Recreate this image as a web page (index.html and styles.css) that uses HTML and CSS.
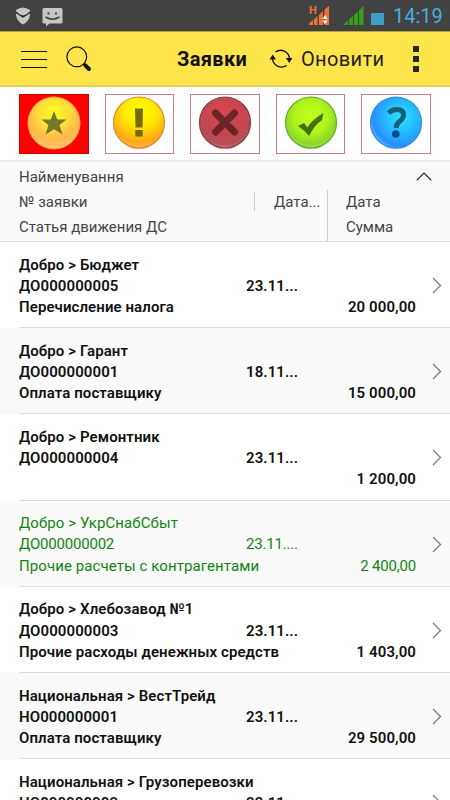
FILE: index.html
```html
<!DOCTYPE html>
<html lang="uk">
<head>
  <meta charset="UTF-8" />
  <meta name="viewport" content="width=device-width, initial-scale=1.0" />
  <title>Заявки</title>
  <link rel="stylesheet" href="styles.css">
</head>
<body>
  <div class="statusbar">
    <svg class="shield" width="16" height="18" viewBox="0 0 16 18">
      <path d="M1 3 Q4.500 0.500 8 0.500 Q11.500 0.500 15 3 V8 Q14.500 14 8 17.500 Q1.500 14 1 8 Z" fill="#c6c6c6" />
      <path d="M0.500 4 L5 7.500 L8 8.500 L11 7.500 L15.500 4 V6 L8 10.800 L0.500 6 Z" fill="#222" />
    </svg>
    <svg class="sms" width="21" height="20" viewBox="0 0 21 20">
      <path d="M2 1 H19 Q20.500 1 20.500 2.500 V15 Q20.500 16.500 19 16.500 H7.500 L4 19.500 V16.500 H2 Q0.500 16.500 0.500 15 V2.500 Q0.500 1 2 1 Z" fill="#c6c6c6" />
      <path d="M5.500 5.500 h2 v2 h-2 Z M13 5.500 h2 v2 h-2 Z" fill="#424242" />
      <path d="M3.500 10 Q10.500 14.500 17.500 10" fill="none" stroke="#424242" stroke-width="1.500" />
    </svg>
    <div class="mobile">
      <span class="network">H</span>
      <svg width="22" height="20" viewBox="0 0 22 20">
        <path d="M0 19 V17.500 L4 14 V19 Z M5 19 V13.500 L8.500 10 V19 Z M10 19 V9 L14 5 V19 Z M15.500 19 V3.500 L20 0 V19 Z" fill="#ec7430" />
        <path d="M16 9 L18.500 13 H13.500 Z M13.500 14.500 H18.500 L16 18.500 Z" fill="#fff" />
      </svg>
    </div>
    <svg class="signal" width="20" height="20" viewBox="0 0 20 20">
      <path d="M0 19 V18 L4 14.500 V19 Z M5 19 V13.500 L9 10 V19 Z M10 19 V9 L14 5.500 V19 Z M15 19 V4.500 L19.500 0 V19 Z" fill="#38a018" />
    </svg>
    <span class="battery"></span>
    <span class="clock">14:19</span>
  </div>

  <header>
    <span class="menu"></span>
    <svg class="search" width="26" height="26" viewBox="0 0 26 26">
      <circle cx="10.800" cy="10.800" r="9.900" fill="none" stroke="#151200" stroke-width="1.200" />
      <path d="M17.500 17.500 L19.500 19.500" stroke="#151200" stroke-width="2" />
      <path d="M19.300 19.300 L23 23" stroke="#151200" stroke-width="4" stroke-linecap="round" />
    </svg>
    <h1>Заявки</h1>
    <svg class="refresh" width="24" height="20" viewBox="0 0 24 20">
      <path d="M6.500 2.800 A9 9 0 0 1 20.500 9.500 M17.500 16.500 A9 9 0 0 1 3.500 9.500" fill="none" stroke="#151200" stroke-width="1.400" />
      <path d="M0.500 10.500 L3.700 5.500 L7 10.500 Z M17 9 H23.500 L20.200 14 Z" fill="#151200" />
    </svg>
    <span class="update">Оновити</span>
    <span class="more"><i></i><i></i><i></i></span>
  </header>

  <nav class="filters">
    <button class="active">
      <svg width="56" height="57" viewBox="0 0 56 57">
        <circle cx="28" cy="28" r="26" fill="url(#gold)" stroke="#ffa52e" stroke-width="1" />
        <path d="M28 16 L31.200 24.500 H40.500 L33.500 30 L36.500 39.500 L28 34.300 L19.500 39.500 L22.500 30 L15.500 24.500 H24.800 Z" fill="#747728" />
      </svg>
    </button>
    <button>
      <svg width="56" height="57" viewBox="0 0 56 57">
        <ellipse cx="28" cy="51.500" rx="15" ry="4.500" fill="url(#shade)" />
        <circle cx="28" cy="27.500" r="25.500" fill="url(#orange)" stroke="#df8b28" stroke-width="1.200" />
        <path d="M24 13.500 H32 L31.500 32.500 H24.500 Z M24.300 35 H31.700 V41.500 H24.300 Z" fill="#776b09" />
      </svg>
    </button>
    <button>
      <svg width="56" height="57" viewBox="0 0 56 57">
        <ellipse cx="28" cy="51.500" rx="15" ry="4.500" fill="url(#shade)" />
        <circle cx="28" cy="27.500" r="25.500" fill="url(#red)" stroke="#843c42" stroke-width="1.200" />
        <path d="M18.500 18 L37.500 37 M37.500 18 L18.500 37" stroke="#6b2428" stroke-width="7" stroke-linecap="round" />
      </svg>
    </button>
    <button>
      <svg width="56" height="57" viewBox="0 0 56 57">
        <ellipse cx="28" cy="51.500" rx="15" ry="4.500" fill="url(#shade)" />
        <circle cx="28" cy="27.500" r="25.500" fill="url(#green)" stroke="#62ad20" stroke-width="1.200" />
        <path d="M15 31 L21 28 L24.500 32.500 Q29 24.500 40.500 18 L39 25 Q31.500 30 26 41 Q21 35 15 31 Z" fill="#486f0d" />
      </svg>
    </button>
    <button>
      <svg width="56" height="57" viewBox="0 0 56 57">
        <ellipse cx="28" cy="51.500" rx="15" ry="4.500" fill="url(#shade)" />
        <circle cx="28" cy="27.500" r="25.500" fill="url(#blue)" stroke="#2e91dd" stroke-width="1.200" />
        <path d="M20.500 18 Q24 14.500 29 14.500 Q35.500 14.500 35.500 20 Q35.500 23.500 32 26 Q28.500 28.500 28 33" fill="none" stroke="#126077" stroke-width="5" />
        <circle cx="27.800" cy="39" r="3.800" fill="#0b4c86" />
      </svg>
    </button>
  </nav>

  <!-- Gradients shared by the filter buttons -->
  <svg class="defs" width="0" height="0">
    <defs>
      <radialGradient id="gold" cx="0.5" cy="0.3" r="0.7">
        <stop offset="0" stop-color="#ffff1c" />
        <stop offset="0.45" stop-color="#ffdb3c" />
        <stop offset="0.75" stop-color="#ffb64c" />
        <stop offset="1" stop-color="#ffc873" />
      </radialGradient>
      <radialGradient id="orange" cx="0.52" cy="0.25" r="0.75">
        <stop offset="0" stop-color="#ffff00" />
        <stop offset="0.45" stop-color="#ffe600" />
        <stop offset="0.85" stop-color="#ffa818" />
        <stop offset="1" stop-color="#ffb84a" />
      </radialGradient>
      <radialGradient id="red" cx="0.5" cy="0.35" r="0.68">
        <stop offset="0" stop-color="#d9454c" />
        <stop offset="0.6" stop-color="#c4464e" />
        <stop offset="0.85" stop-color="#b35058" />
        <stop offset="1" stop-color="#dc8588" />
      </radialGradient>
      <radialGradient id="green" cx="0.5" cy="0.4" r="0.65">
        <stop offset="0" stop-color="#c2ff18" />
        <stop offset="0.5" stop-color="#aef41c" />
        <stop offset="0.8" stop-color="#8cd82a" />
        <stop offset="1" stop-color="#b4e96c" />
      </radialGradient>
      <radialGradient id="blue" cx="0.6" cy="0.4" r="0.7">
        <stop offset="0" stop-color="#2ce5ff" />
        <stop offset="0.45" stop-color="#24baff" />
        <stop offset="0.8" stop-color="#2b8dff" />
        <stop offset="1" stop-color="#6fd0ff" />
      </radialGradient>
      <radialGradient id="shade">
        <stop offset="0" stop-color="#555" />
        <stop offset="1" stop-color="#fff" stop-opacity="0" />
      </radialGradient>
    </defs>
  </svg>

  <div class="columns">
    <div class="names">
      <div>Найменування</div>
      <div>№ заявки</div>
      <div>Статья движения ДС</div>
    </div>
    <div class="date-col">Дата...</div>
    <div class="sum-col">
      <div>Дата</div>
      <div>Сумма</div>
    </div>
    <svg class="collapse" width="16" height="9" viewBox="0 0 16 9">
      <path d="M0.700 8.300 L8 1 L15.300 8.300" fill="none" stroke="#222" stroke-width="1.200" />
    </svg>
  </div>

  <main id="orders">
    <!-- Orders inserted via JavaScript -->
  </main>

  <script>
    const orders = [
      { name: 'Добро > Бюджет', number: 'ДО000000005', date: '23.11...', item: 'Перечисление налога', sum: '20 000,00' },
      { name: 'Добро > Гарант', number: 'ДО000000001', date: '18.11...', item: 'Оплата поставщику', sum: '15 000,00' },
      { name: 'Добро > Ремонтник', number: 'ДО000000004', date: '23.11...', item: '', sum: '1 200,00' },
      { name: 'Добро > УкрСнабСбыт', number: 'ДО000000002', date: '23.11....', item: 'Прочие расчеты с контрагентами', sum: '2 400,00', done: true },
      { name: 'Добро > Хлебозавод №1', number: 'ДО000000003', date: '23.11...', item: 'Прочие расходы денежных средств', sum: '1 403,00' },
      { name: 'Национальная > ВестТрейд', number: 'НО000000001', date: '23.11...', item: 'Оплата поставщику', sum: '29 500,00' },
      { name: 'Национальная > Грузоперевозки', number: 'НО000000002', date: '23.11...', item: '', sum: '' },
    ];

    document.getElementById('orders').innerHTML = orders.map(o => `
      <div class="order ${o.done ? 'done' : ''}">
        <div class="info">
          <div class="line">${o.name.replace('>', '&gt;')}</div>
          <div class="line"><span class="number">${o.number}</span><span class="date">${o.date}</span></div>
          <div class="line"><span class="item">${o.item}</span><span class="sum">${o.sum}</span></div>
        </div>
        <svg class="arrow" width="10" height="17" viewBox="0 0 10 17">
          <path d="M1 1 L8.500 8.500 L1 16" fill="none" stroke="#777" stroke-width="1.200" />
        </svg>
      </div>
    `).join('');
  </script>
</body>
</html>
```
FILE: styles.css
```css
* {
  box-sizing: border-box;
}

body {
  display: flex;
  flex-direction: column;
  margin: 0;
  height: 100vh;
  overflow: hidden;
  font-family: Roboto, 'Noto Sans', sans-serif;
  background-color: #fff;
  color: #111;
}

.statusbar {
  display: flex;
  flex-shrink: 0;
  height: 31px;
  padding: 0 7px 0 15px;
  background-color: #424242;
}

.shield {
  margin-top: 7px;
}

.sms {
  margin: 7px 0 0 11px;
}

.mobile {
  display: flex;
  position: relative;
  margin: 6px 0 0 auto;
}

.network {
  position: absolute;
  left: 0;
  top: -1px;
  font-size: 11px;
  line-height: 11px;
  font-weight: 700;
  color: #ec7430;
}

.signal {
  margin: 6px 0 0 13px;
}

.battery {
  width: 13px;
  height: 12px;
  margin: 13px 9px 0 7px;
  background-color: #3d9fc5;
}

.clock {
  width: 50px;
  font-size: 20px;
  line-height: 33px;
  color: #43b0dc;
}

header {
  display: flex;
  flex-shrink: 0;
  align-items: center;
  height: 56px;
  padding: 1px 31px 0 21px;
  background-color: #ffe54c;
  border-top: 1px solid #b5a535;
  border-bottom: 2px solid #e0d05c;
}

.menu {
  width: 26px;
  height: 17px;
  border-top: 1px solid #151200;
  border-bottom: 1px solid #151200;
  background: linear-gradient(#151200, #151200) center / 100% 1px no-repeat;
}

.search {
  margin-left: 19px;
}

h1 {
  width: 72px;
  margin: 0 0 0 85px;
  font-size: 20px;
  font-weight: 700;
  letter-spacing: 0.35px;
  color: #111;
}

.refresh {
  margin-left: 20px;
}

.update {
  margin-left: 8px;
  font-size: 20px;
  letter-spacing: 0.35px;
  color: #222;
}

.more {
  display: flex;
  flex-direction: column;
  gap: 4px;
  margin-left: auto;
}

.more i {
  width: 6px;
  height: 6px;
  background-color: #29281e;
}

.filters {
  display: grid;
  flex-shrink: 0;
  grid-template-columns: repeat(5, 1fr);
  gap: 16px;
  height: 73px;
  padding: 7px 19px 6px;
}

.filters button {
  display: flex;
  justify-content: center;
  padding: 0;
  border: 1px solid #c77d86;
  background: #fff;
}

.filters .active {
  background: #f00;
  border-color: #c00;
}

.defs {
  position: absolute;
}

.columns {
  display: flex;
  flex-shrink: 0;
  position: relative;
  height: 82px;
  padding-left: 19px;
  border-top: 2px solid #ececec;
  border-bottom: 1px solid #ddd;
  background-color: #fafafa;
  font-size: 15px;
  line-height: 25px;
  color: #444;
}

.names {
  width: 235px;
  padding-top: 3px;
}

.date-col {
  width: 73px;
  height: 19px;
  margin-top: 30px;
  padding-left: 19px;
  border-left: 1px solid #ccc;
  line-height: 21px;
}

.sum-col {
  flex: 1;
  margin-top: 28px;
  padding-left: 18px;
  border-left: 1px solid #ccc;
}

.collapse {
  position: absolute;
  right: 18px;
  top: 10px;
}

main {
  flex: 1;
  min-height: 0;
  overflow: hidden;
}

.order {
  display: flex;
  position: relative;
  height: 86.2px;
  padding: 12.6px 8px 0 19px;
  font-size: 15px;
  font-weight: 600;
  line-height: 21.2px;
  letter-spacing: 0.09px;
}

.order::after {
  content: '';
  position: absolute;
  left: 19px;
  right: 0;
  bottom: 0;
  height: 1px;
  background-color: #ddd;
}

.order:nth-child(even) {
  background-color: #fafafa;
}

.order.done {
  font-weight: 400;
  color: #108410;
}

.done .number,
.done .date,
.done .sum {
  letter-spacing: -0.2px;
}

.info {
  width: 397px;
}

.line {
  display: flex;
  height: 21.2px;
  white-space: nowrap;
}

.number {
  width: 227px;
}

.item {
  flex: 1;
}

.arrow {
  margin: 22.4px 0 0 auto;
}
```
